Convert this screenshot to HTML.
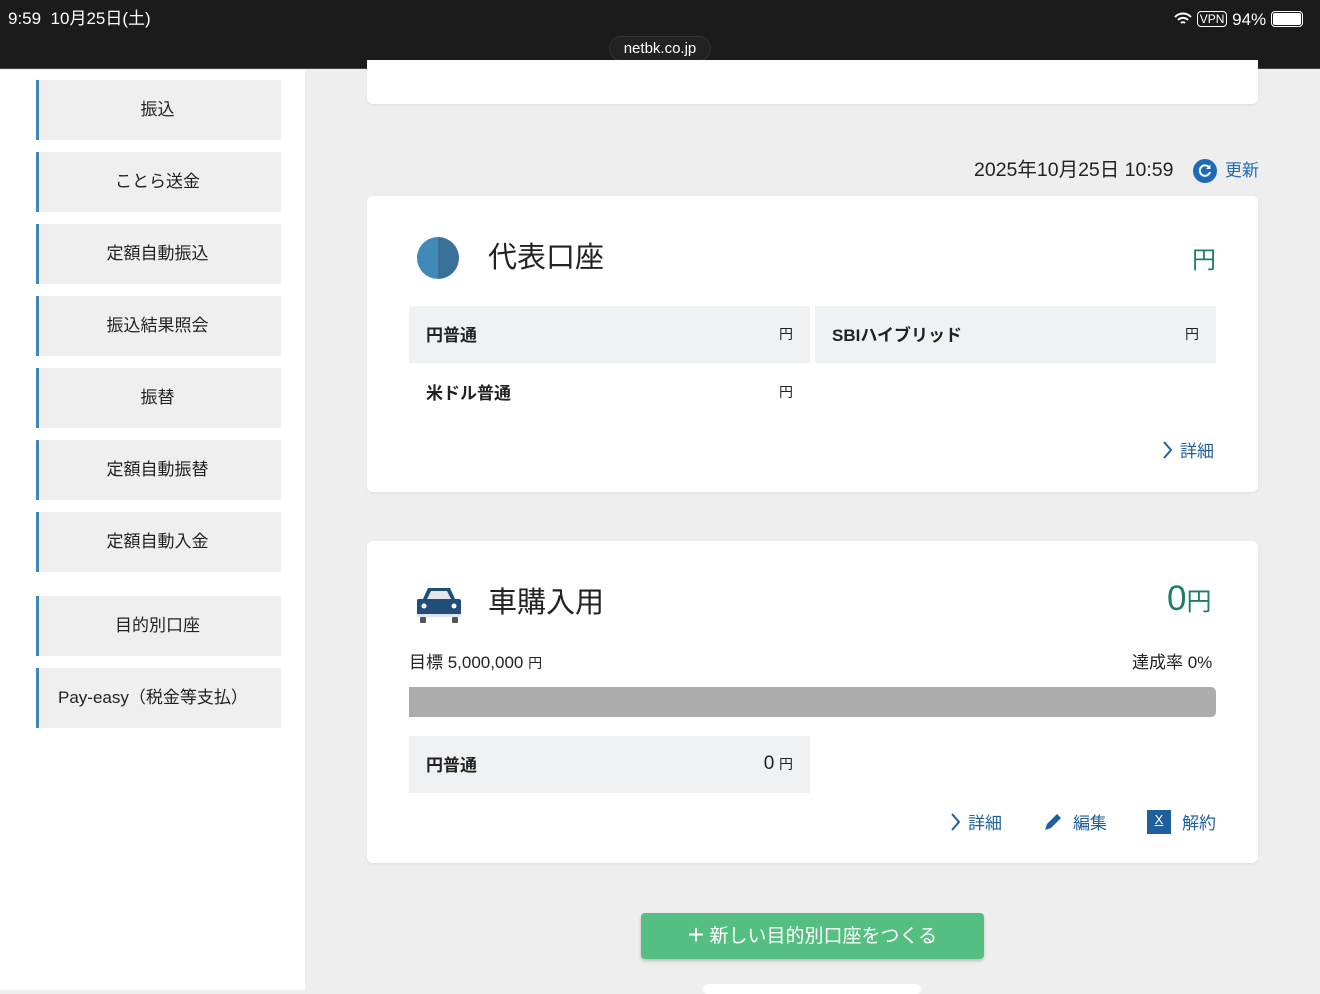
<!DOCTYPE html>
<html><head><meta charset="utf-8"><style>
*{margin:0;padding:0;box-sizing:border-box}
body{width:1320px;height:990px;overflow:hidden;position:relative;background:#eeeeee;font-family:"Liberation Sans","Noto Sans CJK JP",sans-serif;color:#222}
.a{position:absolute}
#top{left:0;top:0;width:1320px;height:69px;background:#1b1b1b;border-bottom:1px solid #444}
#side{left:0;top:70px;width:305px;height:920px;background:#fff}
.m{position:absolute;left:36px;width:245px;height:60px;background:#efefef;border-left:3px solid #3d86ba;font-size:17px;display:flex;align-items:center;justify-content:center;color:#222;padding-bottom:5px;padding-right:5px}
.card{position:absolute;left:367px;width:891px;background:#fff;border-radius:6px;box-shadow:0 1px 2px rgba(0,0,0,.08)}
.row{position:absolute;height:57px;background:#f0f1f3;font-size:17px;font-weight:bold;display:flex;align-items:center;padding:0 17px 2px}
.yen{font-size:14px;font-weight:normal}
.blue{color:#1f5f9e}
.lk{position:absolute;font-size:17px;color:#1f5f9e;display:flex;align-items:center;gap:8px}
</style></head><body>
<div class="a" id="top"></div>
<div class="a" style="left:8px;top:9px;color:#fff;font-size:17px;line-height:20px">9:59&nbsp;&nbsp;10月25日(土)</div>
<div class="a" style="left:609px;top:36px;width:102px;height:25px;border-radius:12px;background:#222;border:1px solid #333;color:#fff;font-size:15px;text-align:center;line-height:23px">netbk.co.jp</div>
<div class="a" style="left:1174px;top:9px;color:#fff;font-size:17px;line-height:20px;white-space:nowrap">
<svg width="18" height="14" viewBox="0 0 18 14" style="vertical-align:-1px"><path d="M1 5a11 11 0 0 1 16 0M4 8a7 7 0 0 1 10 0M7 11a3 3 0 0 1 4 0" stroke="#fff" stroke-width="2" fill="none"/></svg>
<span style="border:1.5px solid #fff;border-radius:4px;font-size:12px;padding:0 2px;vertical-align:2px">VPN</span> 94% <span style="display:inline-block;width:32px;height:16px;border:1.5px solid #fff;border-radius:4px;padding:1px;vertical-align:-2px"><span style="display:block;width:100%;height:100%;background:#fff;border-radius:2px"></span></span></div>
<div class="a" id="side"></div>
<div class="m" style="top:80px">振込</div>
<div class="m" style="top:152px">ことら送金</div>
<div class="m" style="top:224px">定額自動振込</div>
<div class="m" style="top:296px">振込結果照会</div>
<div class="m" style="top:368px">振替</div>
<div class="m" style="top:440px">定額自動振替</div>
<div class="m" style="top:512px">定額自動入金</div>
<div class="m" style="top:596px">目的別口座</div>
<div class="m" style="top:668px;justify-content:flex-start;padding-left:19px">Pay-easy（税金等支払）</div>

<div class="card" style="top:60px;height:44px;border-radius:0 0 6px 6px"></div>
<div class="a" style="left:974px;top:158px;font-size:19.5px;line-height:24px">2025年10月25日 10:59</div>
<svg class="a" style="left:1193px;top:159px" width="24" height="24"><circle cx="12" cy="12" r="12" fill="#1f6ab8"/><path d="M16.5 9A5.2 5.2 0 1 0 17 13" stroke="#fff" stroke-width="2" fill="none"/><path d="M17.5 5.5v4.5h-4.5z" fill="#fff"/></svg>
<div class="a" style="left:1225px;top:159px;font-size:17px;line-height:24px;color:#1f6ab8">更新</div>

<div class="card" style="top:196px;height:296px">
<svg class="a" style="left:50px;top:41px" width="42" height="42"><path d="M21 0a21 21 0 0 0 0 42z" fill="#4189b7"/><path d="M21 0a21 21 0 0 1 0 42z" fill="#3a7097"/></svg>
<div class="a" style="left:121px;top:38px;font-size:29px">代表口座</div>
<div class="a" style="left:825px;top:44px;font-size:24px;color:#1e8060">円</div>
<div class="row" style="left:42px;top:110px;width:401px">円普通<span style="flex:1"></span><span class="yen">円</span></div>
<div class="row" style="left:448px;top:110px;width:401px">SBIハイブリッド<span style="flex:1"></span><span class="yen">円</span></div>
<div class="row" style="left:42px;top:168px;width:401px;background:none">米ドル普通<span style="flex:1"></span><span class="yen">円</span></div>
<div class="lk" style="left:795px;top:241px"><svg width="10" height="18"><path d="M2 1l7 8-7 8" stroke="#1f5f9e" stroke-width="2" fill="none"/></svg>詳細</div>
</div>

<div class="card" style="top:541px;height:322px">
<svg class="a" style="left:48px;top:44px" width="48" height="38" viewBox="0 0 48 38"><path d="M8 14l5-11h22l5 11h4a2 2 0 0 1 2 2v13H2V16a2 2 0 0 1 2-2z" fill="#1f4e79"/><path d="M12 14l4-8h16l4 8z" fill="#e6e6ea"/><rect x="2" y="29" width="44" height="3" fill="#dbe3ee"/><circle cx="9" cy="21" r="2.5" fill="#fff"/><circle cx="39" cy="21" r="2.5" fill="#fff"/><rect x="5" y="32" width="6" height="6" rx="1" fill="#555"/><rect x="37" y="32" width="6" height="6" rx="1" fill="#555"/></svg>
<div class="a" style="left:121px;top:38px;font-size:29px">車購入用</div>
<div class="a" style="left:800px;top:38px;font-size:35px;color:#1e8060">0<span style="font-size:25px">円</span></div>
<div class="a" style="left:42px;top:107px;font-size:17px">目標 5,000,000 <span style="font-size:14px">円</span></div>
<div class="a" style="left:765px;top:107px;font-size:17px">達成率 0%</div>
<div class="a" style="left:42px;top:146px;width:807px;height:30px;background:#acacac;border-radius:0 5px 5px 0"></div>
<div class="row" style="left:42px;top:195px;width:401px">円普通<span style="flex:1"></span><span style="font-weight:normal;font-size:19px">0</span>&nbsp;<span class="yen">円</span></div>
<div class="lk" style="left:583px;top:268px"><svg width="10" height="18"><path d="M2 1l7 8-7 8" stroke="#1f5f9e" stroke-width="2" fill="none"/></svg>詳細</div>
<div class="lk" style="left:676px;top:268px;gap:10px"><svg width="20" height="20"><path d="M2 18l2-6L14 2l4 4L8 16z" fill="#1f5f9e"/></svg>編集</div>
<div class="lk" style="left:780px;top:268px;gap:11px"><div style="width:24px;height:24px;background:#1f5f9e;color:#fff;font-size:13px;text-align:center;line-height:20px;text-decoration:underline">X</div>解約</div>
</div>

<div class="a" style="left:641px;top:913px;width:343px;height:46px;background:#55bf82;border-radius:4px;box-shadow:0 2px 3px rgba(0,0,0,.2);color:#fff;font-size:19px;text-align:center;line-height:44px"><span style="font-size:28px;vertical-align:-2px">+</span> 新しい目的別口座をつくる</div>
<div class="a" style="left:703px;top:984px;width:218px;height:10px;background:#fff;border-radius:6px"></div>
</body></html>
